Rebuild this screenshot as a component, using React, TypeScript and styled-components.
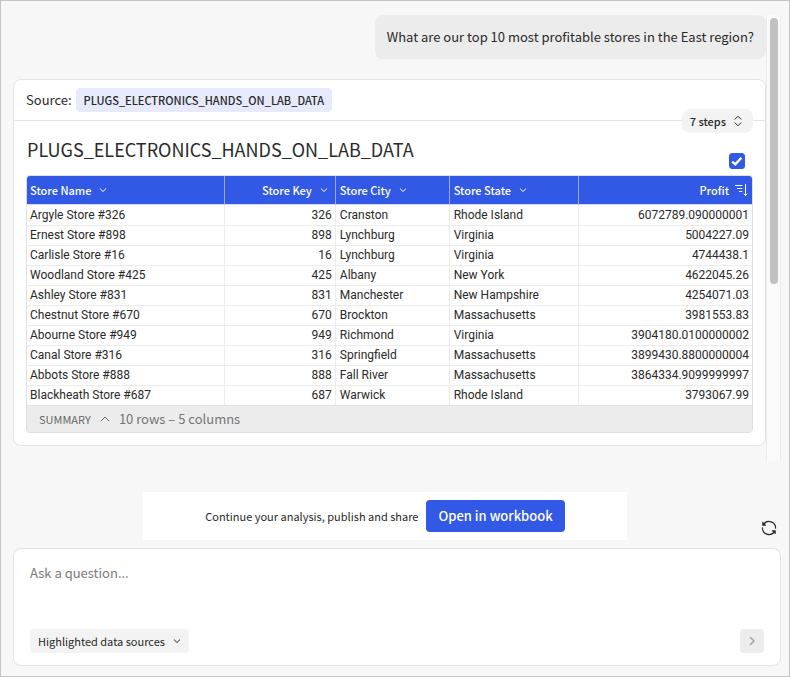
import React from "react";
import styled, { createGlobalStyle, css } from "styled-components";

const sans = `"Noto Sans CJK SC", "Noto Sans", sans-serif`;
const blue = "#3159e6";
const ink = "#292929";
const line = "#e3e3e3";

const GlobalStyle = createGlobalStyle`
  *, *::before, *::after { box-sizing: border-box; }
  body { margin: 0; background: #f7f7f7; }
  button, input, select, textarea { font: inherit; color: inherit; }
`;

const Page = styled.div`
  min-height: 100vh;
  display: flex;
  flex-direction: column;
  padding: 14px 8px 10px 12px;
  border: 1px solid #c4c4c4;
  background: #f7f7f7;
  color: ${ink};
  font-family: ${sans};
  font-size: 13px;
  line-height: 20px;
`;

const Conversation = styled.main`
  display: flex;
  margin-bottom: 31px;
`;

const Thread = styled.div`
  flex: 1;
  min-width: 0;
  display: flex;
  flex-direction: column;
  gap: 20px;
  padding-bottom: 15px;
`;

const Question = styled.p`
  align-self: flex-end;
  margin: 0;
  padding: 12px;
  border-radius: 8px;
  background: #ececec;
`;

const Track = styled.div`
  width: 15px;
  padding: 3px 0 0 3px;
  border: solid #ececec;
  border-width: 0 1px;
  background: #fafafa;
`;

const Thumb = styled.div`
  width: 8px;
  height: 60%;
  border-radius: 4px;
  background: #c1c1c1;
`;

const Card = styled.section`
  border: 1px solid ${line};
  border-radius: 8px;
  background: #fff;
`;

const SourceBar = styled.header`
  position: relative;
  display: flex;
  align-items: center;
  gap: 4px;
  height: 41px;
  padding: 0 12px;
  border-bottom: 1px solid ${line};
`;

const SourceTag = styled.span`
  padding: 2px 8px;
  border-radius: 4px;
  background: #e6eafb;
  font-size: 11px;
  font-weight: 500;
`;

const StepsButton = styled.button`
  position: absolute;
  right: 12px;
  bottom: -13px;
  display: flex;
  align-items: center;
  gap: 4px;
  height: 24px;
  padding: 0 7px 0 8px;
  border: 0;
  border-radius: 8px;
  background: #f3f3f3;
  font-size: 11px;
  font-weight: 500;
`;

const CardBody = styled.div`
  padding: 12px;
`;

const TitleRow = styled.div`
  display: flex;
  justify-content: space-between;
  align-items: flex-end;
  padding: 0 8px 6px 1px;
`;

const Title = styled.h1`
  margin: 0 0 3px;
  font-size: 18px;
  font-weight: 400;
  line-height: 33px;
`;

const Tick = styled.label`
  display: grid;
  width: 16px;
  height: 16px;

  > * { grid-area: 1 / 1; }
  svg { pointer-events: none; }
`;

const TickBox = styled.input`
  appearance: none;
  width: 16px;
  height: 16px;
  margin: 0;
  border: 1px solid ${blue};
  border-radius: 3px;
  background: #fff;

  &:checked { background: ${blue}; }
`;

const TableFrame = styled.div`
  overflow: hidden;
  border: 1px solid #e0e0e4;
  border-radius: 4px;
`;

const Table = styled.table`
  width: 100%;
  table-layout: fixed;
  border-collapse: separate;
  border-spacing: 0;
`;

const Col = styled.col<{ $width?: string }>`
  width: ${(p) => p.$width ?? "auto"};
`;

const cell = css<{ $end?: boolean }>`
  padding: 0 3px 0 4px;
  text-align: ${(p) => (p.$end ? "right" : "left")};
  white-space: nowrap;

  &:first-child { padding-left: 3px; }
  &:not(:last-child) { border-right: 1px solid #ececec; }
`;

const HeadCell = styled.th<{ $end?: boolean }>`
  ${cell}
  height: 29px;
  border-bottom: 1px solid #d5dcf5;
  background: ${blue};
  color: #fff;
  font-size: 11px;
  font-weight: 500;

  &:not(:last-child) { border-right-color: #98acf2; }
`;

const HeadLabel = styled.span<{ $end?: boolean }>`
  display: flex;
  align-items: center;
  justify-content: ${(p) => (p.$end ? "flex-end" : "flex-start")};
  gap: 4px;
`;

const HeadButton = styled.button`
  display: grid;
  place-items: center;
  width: 16px;
  height: 16px;
  padding: 0;
  border: 0;
  background: none;
`;

const Cell = styled.td<{ $end?: boolean }>`
  ${cell}
  height: 20px;
  font-family: Roboto, sans-serif;
  font-size: 12px;
  line-height: 19px;

  tr:not(:first-child) > & { border-top: 1px solid #ececec; }
  tr:first-child > & { padding-top: 1px; }
`;

const Summary = styled.footer`
  display: flex;
  align-items: center;
  gap: 8px;
  height: 27px;
  padding: 0 12px;
  border-top: 1px solid ${line};
  background: #ececec;
  color: #757575;
`;

const SummaryButton = styled.button`
  display: flex;
  align-items: center;
  gap: 8px;
  padding: 0;
  border: 0;
  background: none;
  color: #666;
  font-size: 11px;
`;

const Actions = styled.div`
  display: flex;
  margin-bottom: 8px;
`;

const ActionArea = styled.div`
  flex: 1;
  display: flex;
  justify-content: center;
`;

const CallToAction = styled.div`
  display: flex;
  align-items: center;
  justify-content: center;
  gap: 8px;
  width: 65%;
  padding: 8px 0;
  background: #fff;
  font-size: 11px;
  white-space: nowrap;
`;

const OpenButton = styled.button`
  height: 32px;
  padding: 0 12px;
  border: 0;
  border-radius: 4px;
  background: ${blue};
  color: #fff;
  font-size: 13px;
  font-weight: 500;
`;

const RefreshButton = styled.button`
  display: grid;
  place-items: center;
  align-self: flex-end;
  width: 24px;
  height: 24px;
  padding: 0;
  border: 0;
  background: none;
`;

const Composer = styled.form`
  flex: 1;
  display: flex;
  flex-direction: column;
  gap: 8px;
  padding: 12px 16px;
  border: 1px solid ${line};
  border-radius: 8px;
  background: #fff;
`;

const Prompt = styled.textarea`
  flex: 1;
  min-height: 56px;
  padding: 2px 0;
  border: 0;
  outline: 0;
  background: none;
  resize: none;

  &::placeholder { color: #7a7a7a; }
`;

const ComposerBar = styled.div`
  display: flex;
  align-items: center;
  justify-content: space-between;
`;

const Picker = styled.label`
  display: grid;
  align-items: center;
  font-size: 11px;

  > * { grid-area: 1 / 1; }
  svg { justify-self: end; margin-right: 7px; pointer-events: none; }
`;

const PickerSelect = styled.select`
  appearance: none;
  height: 24px;
  padding: 0 24px 0 8px;
  border: 0;
  border-radius: 4px;
  background: #f3f3f3;
`;

const SendButton = styled.button`
  display: grid;
  place-items: center;
  width: 24px;
  height: 24px;
  padding: 0;
  border: 0;
  border-radius: 4px;
  background: #ececec;
  color: #a3a3a3;
`;

const Icon = ({ d, size = 10, width = 1 }: { d: string; size?: number; width?: number }) => (
  <svg width={size} height={size} viewBox={`0 0 ${size} ${size}`} fill="none" stroke="currentColor"
    strokeWidth={width} strokeLinecap="round" strokeLinejoin="round" aria-hidden="true">
    <path d={d} />
  </svg>
);

const chevronDown = "M2.2 3.8 5 6.5 7.8 3.8";

const columns = [
  { name: "Store Name", width: "27.3%" },
  { name: "Store Key", width: "15.3%", end: true },
  { name: "Store City", width: "15.7%" },
  { name: "Store State", width: "17.8%" },
  { name: "Profit", end: true, sorted: true },
];

const stores = [
  ["Argyle Store #326", "326", "Cranston", "Rhode Island", "6072789.090000001"],
  ["Ernest Store #898", "898", "Lynchburg", "Virginia", "5004227.09"],
  ["Carlisle Store #16", "16", "Lynchburg", "Virginia", "4744438.1"],
  ["Woodland Store #425", "425", "Albany", "New York", "4622045.26"],
  ["Ashley Store #831", "831", "Manchester", "New Hampshire", "4254071.03"],
  ["Chestnut Store #670", "670", "Brockton", "Massachusetts", "3981553.83"],
  ["Abourne Store #949", "949", "Richmond", "Virginia", "3904180.0100000002"],
  ["Canal Store #316", "316", "Springfield", "Massachusetts", "3899430.8800000004"],
  ["Abbots Store #888", "888", "Fall River", "Massachusetts", "3864334.9099999997"],
  ["Blackheath Store #687", "687", "Warwick", "Rhode Island", "3793067.99"],
];

export default function App() {
  return (
    <>
      <GlobalStyle />
      <Page>
        <Conversation>
          <Thread>
            <Question>What are our top 10 most profitable stores in the East region?</Question>
            <Card>
              <SourceBar>
                Source:
                <SourceTag>PLUGS_ELECTRONICS_HANDS_ON_LAB_DATA</SourceTag>
                <StepsButton type="button">
                  7 steps
                  <Icon size={16} d="M5 6.2 8 3.2 11 6.2M5 9.8 8 12.8 11 9.8" />
                </StepsButton>
              </SourceBar>
              <CardBody>
                <TitleRow>
                  <Title>PLUGS_ELECTRONICS_HANDS_ON_LAB_DATA</Title>
                  <Tick>
                    <TickBox type="checkbox" defaultChecked aria-label="Include table" />
                    <svg width="16" height="16" viewBox="0 0 16 16" fill="none" stroke="#fff" strokeWidth="2.4" aria-hidden="true">
                      <path d="M3.2 8.6 6.3 11.3 12.4 4.8" />
                    </svg>
                  </Tick>
                </TitleRow>
                <TableFrame>
                  <Table>
                    <colgroup>
                      {columns.map((c) => <Col key={c.name} $width={c.width} />)}
                    </colgroup>
                    <thead>
                      <tr>
                        {columns.map((c) => (
                          <HeadCell key={c.name} $end={c.end} scope="col">
                            <HeadLabel $end={c.end}>
                              {c.name}
                              <HeadButton type="button" aria-label={`${c.name} options`}>
                                {c.sorted
                                  ? <Icon size={16} d="M2.5 3.5H9M4.5 6.5H9M6.5 9.5H9M12.5 2.5V13.5M11 12 12.5 13.5 14 12" />
                                  : <Icon d={chevronDown} />}
                              </HeadButton>
                            </HeadLabel>
                          </HeadCell>
                        ))}
                      </tr>
                    </thead>
                    <tbody>
                      {stores.map((row) => (
                        <tr key={row[0]}>
                          {row.map((value, i) => <Cell key={columns[i].name} $end={columns[i].end}>{value}</Cell>)}
                        </tr>
                      ))}
                    </tbody>
                  </Table>
                  <Summary>
                    <SummaryButton type="button">
                      SUMMARY
                      <Icon size={12} d="M2 8 6 4 10 8" />
                    </SummaryButton>
                    10 rows – 5 columns
                  </Summary>
                </TableFrame>
              </CardBody>
            </Card>
          </Thread>
          <Track><Thumb /></Track>
        </Conversation>

        <Actions>
          <ActionArea>
            <CallToAction>
              Continue your analysis, publish and share
              <OpenButton type="button">Open in workbook</OpenButton>
            </CallToAction>
          </ActionArea>
          <RefreshButton type="button" aria-label="Start over">
            <svg width="16" height="16" viewBox="0 0 16 16" fill="none" stroke="currentColor" strokeWidth="1.2" aria-hidden="true">
              <path d="M2.6 4.4A6.5 6.5 0 0 1 14.5 8.6M13.4 11.6A6.5 6.5 0 0 1 1.5 7.4" />
              <path d="M1.6 2V5.4H5ZM14.4 14V10.6H11Z" fill="currentColor" strokeWidth="0.6" strokeLinejoin="round" />
            </svg>
          </RefreshButton>
        </Actions>

        <Composer>
          <Prompt placeholder="Ask a question..." aria-label="Ask a question" />
          <ComposerBar>
            <Picker>
              <PickerSelect aria-label="Data sources">
                <option>Highlighted data sources</option>
              </PickerSelect>
              <Icon d={chevronDown} />
            </Picker>
            <SendButton type="submit" aria-label="Send">
              <Icon size={10} width={1.5} d="M3.5 1.5 7 5 3.5 8.5" />
            </SendButton>
          </ComposerBar>
        </Composer>
      </Page>
    </>
  );
}
